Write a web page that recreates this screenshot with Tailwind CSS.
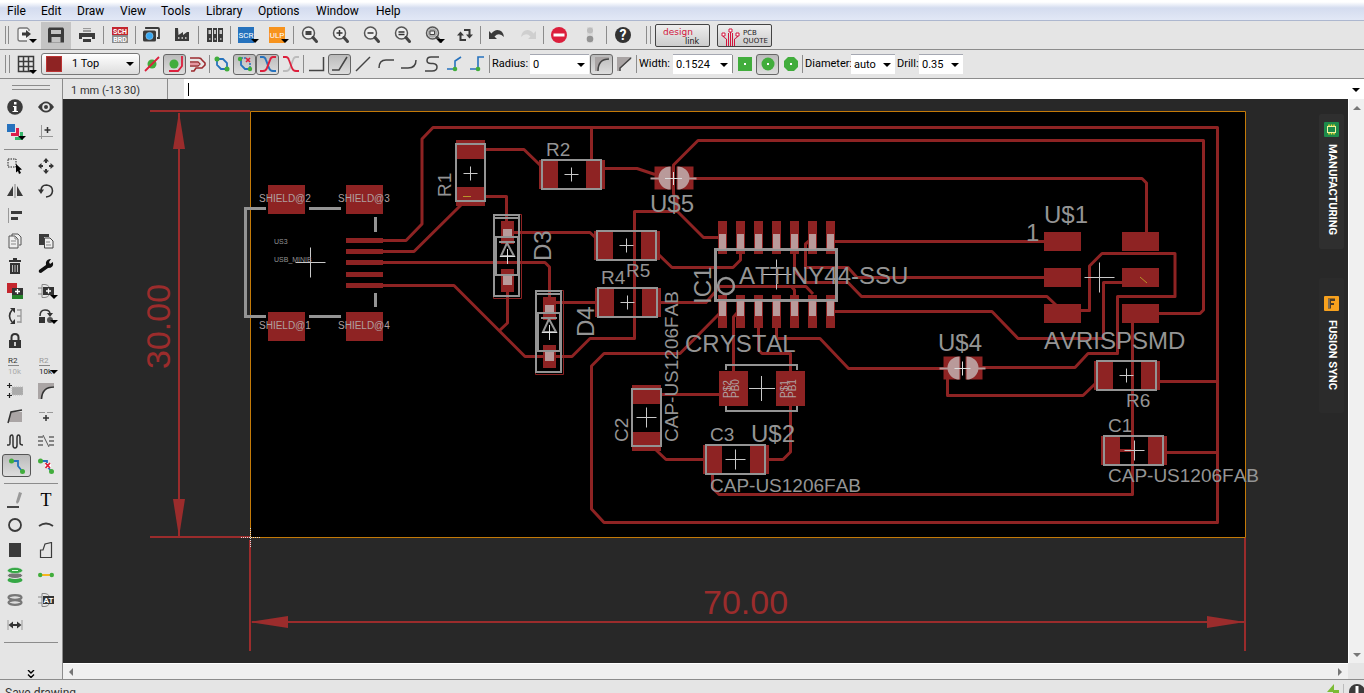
<!DOCTYPE html>
<html lang="en">

<head>
    <meta charset="UTF-8">
    <meta name="viewport" content="width=device-width, initial-scale=1.0">
    <title>Board editor</title>
    <script src="https://cdn.jsdelivr.net/npm/@tailwindcss/browser@4"></script>
</head>

<body class="h-screen flex flex-col overflow-hidden bg-[#e5e5e5] font-[Roboto,sans-serif] text-[11px] text-black">

    <!-- shared shapes -->
    <svg class="hidden">
        <symbol id="drop" viewBox="0 0 8 4"><path d="M0 0H8L4 4Z" fill="#000" /></symbol>
        <symbol id="lens" viewBox="0 0 20 20">
            <circle cx="8.500" cy="8" r="6" fill="#eee" stroke="#555" stroke-width="1.500" />
            <path d="M13 12.500l3.500 4" stroke="#444" stroke-width="3" stroke-linecap="round" />
        </symbol>
    </svg>

    <!-- menu -->
    <nav class="h-[21px] shrink-0 border-b border-[#adb7cf] bg-linear-to-b from-white from-10% via-[#d4dcef] via-40% to-[#e2e8f6] flex items-center pl-[7px] text-[12px] leading-5">
        <a href="#" class="w-[34px] pt-px">File</a>
        <a href="#" class="w-9 pt-px">Edit</a>
        <a href="#" class="w-[43px] pt-px">Draw</a>
        <a href="#" class="w-[41px] pt-px">View</a>
        <a href="#" class="w-[45px] pt-px">Tools</a>
        <a href="#" class="w-[52px] pt-px">Library</a>
        <a href="#" class="w-[58px] pt-px">Options</a>
        <a href="#" class="w-[60px] pt-px">Window</a>
        <a href="#" class="pt-px">Help</a>
    </nav>

    <!-- action toolbar -->
    <div class="h-[29px] shrink-0 border-b border-[#8c8c8c] flex items-center pl-[5px]">
        <span class="w-1 h-[18px] border-x border-[#8c8c8c]"></span>
        <button aria-label="Open" class="relative w-8 h-7 flex items-center justify-center">
            <svg class="size-5" viewBox="0 0 20 20"><path d="M14 6V4.500L12 3H5Q3 3 3 5V14Q3 16 5 16H12" fill="#f5f5f5" stroke="#777" stroke-width="1.300" /><path d="M7 7.500H11V5L16 9L11 13V10.500H7Z" fill="#3b3b3b" /></svg>
            <svg class="absolute right-1 bottom-1.5 w-2 h-1"><use href="#drop" /></svg>
        </button>
        <button aria-label="Save" class="w-[30px] h-[27px] bg-[#c4c4c4] flex items-center justify-center">
            <svg class="size-5" viewBox="0 0 20 20"><path d="M3 2.500H17L18 4V17.500H2V4Z" fill="#3b3b3b" /><path d="M5 5H15V9H5ZM5.500 12H14.500V17.500H5.500Z" fill="#c4c4c4" /></svg>
        </button>
        <button aria-label="Print" class="w-8 h-7 flex items-center justify-center">
            <svg class="size-5" viewBox="0 0 20 20"><path d="M6 3H14V7H6Z" fill="#999" /><path d="M6 4.500H14" stroke="#ddd" /><path d="M2 8H18V14H15V12H5V14H2Z" fill="#3b3b3b" /><path d="M6 14H14V17H6Z" fill="#3b3b3b" /></svg>
        </button>
        <span class="w-px h-[18px] bg-[#8c8c8c]"></span>
        <button aria-label="Schematic / board" class="w-[31px] h-7 flex items-center justify-center">
            <svg class="w-4 h-4" viewBox="0 0 16 16"><path d="M0 0H16V8H0Z" fill="#c4262e" /><path d="M0 8H16V16H0Z" fill="#8c8c8c" /><text x="8" y="7" font-size="7" font-weight="bold" text-anchor="middle" fill="#fff">SCH</text><text x="8" y="15" font-size="7" font-weight="bold" text-anchor="middle" fill="#fff">BRD</text></svg>
        </button>
        <span class="w-px h-[18px] bg-[#8c8c8c]"></span>
        <button aria-label="Image" class="w-[30px] h-7 flex items-center justify-center">
            <svg class="size-5" viewBox="0 0 20 20"><path d="M5 4V3H17Q18 3 18 4V13H16" fill="none" stroke="#3b3b3b" stroke-width="1.800" /><rect x="2" y="5.500" width="13" height="11" rx="1.500" fill="#3b3b3b" /><circle cx="8.500" cy="11" r="3.600" fill="#35a7f2" stroke="#9dcff0" stroke-width=".6" /></svg>
        </button>
        <button aria-label="CAM" class="w-8 h-7 flex items-center justify-center">
            <svg class="size-5" viewBox="0 0 20 20"><path d="M3 3H6L6.500 10L11 7V10L15 7H17V16H3Z" fill="#3b3b3b" /><path d="M6 13H7.500M9.500 13H11M13 13H14.500" stroke="#ddd" stroke-width="1.500" /></svg>
        </button>
        <span class="w-px h-[18px] bg-[#8c8c8c]"></span>
        <button aria-label="Library manager" class="w-[31px] h-7 flex items-center justify-center">
            <svg class="size-5" viewBox="0 0 20 20"><path d="M2 3H7V17H2ZM8 3H12V17H8ZM13 3H18V17H13Z" fill="#3b3b3b" /><path d="M3.500 5H6V9H3.500ZM9 5H11V9H9ZM14.500 5H17V9H14.500Z" fill="#c8c8c8" /><path d="M4 14H5.500M9.500 14H11M15 14H16.500" stroke="#ccc" stroke-width="1.500" /></svg>
        </button>
        <span class="w-px h-[18px] bg-[#8c8c8c]"></span>
        <button aria-label="Script" class="relative w-[30px] h-7 flex items-center justify-center">
            <svg class="w-4 h-4" viewBox="0 0 16 16"><path d="M0 0H16V16H0Z" fill="#2672bd" /><text x="8" y="11" font-size="8" text-anchor="middle" fill="#fff">SCR</text></svg>
            <svg class="absolute right-0.5 bottom-1.5 w-2 h-1"><use href="#drop" /></svg>
        </button>
        <button aria-label="ULP" class="relative w-8 h-7 flex items-center justify-center">
            <svg class="w-4 h-4" viewBox="0 0 16 16"><path d="M0 0H16V16H0Z" fill="#f7931e" /><text x="8" y="11" font-size="8" text-anchor="middle" fill="#fff">ULP</text></svg>
            <svg class="absolute right-1 bottom-1.5 w-2 h-1"><use href="#drop" /></svg>
        </button>
        <span class="w-px h-[18px] bg-[#8c8c8c]"></span>
        <button aria-label="Zoom to fit" class="w-[31px] h-7 flex items-center justify-center">
            <svg class="size-5" viewBox="0 0 20 20"><use href="#lens" /><path d="M5.500 6H11.500V10H5.500Z" fill="#444" /></svg>
        </button>
        <button aria-label="Zoom in" class="w-[31px] h-7 flex items-center justify-center">
            <svg class="size-5" viewBox="0 0 20 20"><use href="#lens" /><path d="M5.500 8H11.500M8.500 5V11" stroke="#333" stroke-width="1.500" /></svg>
        </button>
        <button aria-label="Zoom out" class="w-[31px] h-7 flex items-center justify-center">
            <svg class="size-5" viewBox="0 0 20 20"><use href="#lens" /><path d="M5.500 8H11.500" stroke="#333" stroke-width="1.500" /></svg>
        </button>
        <button aria-label="Redraw" class="w-[31px] h-7 flex items-center justify-center">
            <svg class="size-5" viewBox="0 0 20 20"><use href="#lens" /><path d="M5.500 7H11.500M5.500 9.500H11.500" stroke="#333" stroke-width="1.300" /></svg>
        </button>
        <button aria-label="Zoom select" class="relative w-[31px] h-7 flex items-center justify-center">
            <svg class="size-5" viewBox="0 0 20 20"><use href="#lens" /><circle cx="8.500" cy="8" r="4.800" fill="#aaa" /><path d="M6 6H10.500V9.500H6Z" fill="#eee" stroke="#444" /></svg>
            <svg class="absolute right-1 bottom-1.5 w-2 h-1"><use href="#drop" /></svg>
        </button>
        <button aria-label="Refresh" class="w-[31px] h-7 flex items-center justify-center">
            <svg class="size-5" viewBox="0 0 20 20"><path d="M9 5H14.500V10M11 15H5.500V10" fill="none" stroke="#3b3b3b" stroke-width="2" /><path d="M11 9.500H18L14.500 13.500ZM2 10.500H9L5.500 6.500Z" fill="#3b3b3b" /></svg>
        </button>
        <span class="w-px h-[18px] bg-[#8c8c8c]"></span>
        <button aria-label="Undo" class="w-[31px] h-7 flex items-center justify-center">
            <svg class="size-5" viewBox="0 0 20 20"><path d="M2 6V14H10L7.500 11.500Q12 7 17 12Q16 5 10.500 5Q7 5 4.500 8.500Z" fill="#3b3b3b" /></svg>
        </button>
        <button aria-label="Redo" class="w-[31px] h-7 flex items-center justify-center">
            <svg class="size-5" viewBox="0 0 20 20"><path d="M18 6V14H10L12.500 11.500Q8 7 3 12Q4 5 9.500 5Q13 5 15.500 8.500Z" fill="#cfcfcf" /></svg>
        </button>
        <span class="w-px h-[18px] bg-[#8c8c8c]"></span>
        <button aria-label="Stop" class="w-[30px] h-7 flex items-center justify-center">
            <svg class="size-5" viewBox="0 0 20 20"><circle cx="10" cy="10" r="8" fill="#dc1f3c" /><path d="M4.500 8.500H15.500V11.500H4.500Z" fill="#fff" /></svg>
        </button>
        <button aria-label="Status" class="w-8 h-7 flex items-center justify-center">
            <svg class="size-5" viewBox="0 0 20 20"><path d="M7 2H13V18H7Z" fill="#dadada" /><circle cx="10" cy="5.500" r="3" fill="#bdbdbd" /><circle cx="10" cy="14" r="3.300" fill="#939393" /></svg>
        </button>
        <span class="w-px h-[18px] bg-[#8c8c8c]"></span>
        <button aria-label="Help" class="w-[31px] h-7 flex items-center justify-center">
            <svg class="size-5" viewBox="0 0 20 20"><circle cx="10" cy="10" r="8" fill="#333" /><text x="10" y="15" font-size="14" font-weight="bold" text-anchor="middle" fill="#fff">?</text></svg>
        </button>
        <span class="ml-2 mr-1 w-[5px] h-[18px] border-x border-[#8c8c8c]"></span>
        <button aria-label="design link" class="w-[55px] h-[23px] rounded-[2px] border border-[#444] bg-linear-to-b from-[#eee] to-[#ccc]">
            <svg class="w-full h-full" viewBox="0 0 53 21"><text x="7" y="10" font-size="9" fill="#d2143c" font-family="DejaVu Sans">design</text><text x="29" y="19" font-size="8" fill="#111" font-family="DejaVu Sans">link</text></svg>
        </button>
        <button aria-label="PCB quote" class="ml-[7px] w-[55px] h-[23px] rounded-[2px] border border-[#444] bg-linear-to-b from-[#eee] to-[#ccc]">
            <svg class="w-full h-full" viewBox="0 0 53 21"><g fill="none" stroke="#d2143c" stroke-width="1"><path d="M5.500 11V12L8.500 14V21M10.500 8V21M12.500 7V21M14.500 8V21M19.500 11V12L16.500 14V21" /><path d="M4 8H7V11H4ZM11 4H14V7H11ZM18 8H21V11H18Z" fill="#fff" /></g><text x="25" y="10" font-size="7" fill="#222" font-family="DejaVu Sans">PCB</text><text x="25" y="18" font-size="7" fill="#222" font-family="DejaVu Sans">QUOTE</text></svg>
        </button>
    </div>

    <!-- parameter toolbar -->
    <div class="h-[29px] shrink-0 border-b border-[#8c8c8c] flex items-center pl-[5px]">
        <span class="w-[5px] h-[18px] border-x border-[#8c8c8c]"></span>
        <button aria-label="Grid" class="relative w-[31px] h-7 flex items-center justify-center">
            <svg class="size-5" viewBox="0 0 20 20"><path d="M2.500 2.500H17.500V17.500H2.500ZM2.500 7.500H17.500M2.500 12.500H17.500M7.500 2.500V17.500M12.500 2.500V17.500" fill="none" stroke="#3b3b3b" stroke-width="1.500" /></svg>
            <svg class="absolute right-1 bottom-1 w-2 h-1"><use href="#drop" /></svg>
        </button>
        <div class="relative w-[99px] h-[22px]">
            <select aria-label="Layer" class="appearance-none w-full h-full rounded-[3px] border border-[#777] bg-linear-to-b from-white to-[#ddd] pl-[30px] text-[11px] leading-4">
                <option>1 Top</option>
            </select>
            <span class="absolute left-[5px] top-[3px] size-4 bg-[#8e2323] border border-[#b33] pointer-events-none"></span>
            <svg class="absolute right-[6px] top-[9px] w-2 h-1 pointer-events-none"><use href="#drop" /></svg>
        </div>
        <button aria-label="Ignore obstacles" class="w-[23px] h-[21px] flex items-center justify-center">
            <svg class="size-[18px]" viewBox="0 0 18 18"><circle cx="9" cy="9" r="4.500" fill="#41ad3c" /><path d="M2 16L16 2" stroke="#dc1f3c" stroke-width="1.800" /></svg>
        </button>
        <button aria-label="Walkaround" class="w-[23px] h-[21px] flex items-center justify-center rounded-[3px] border border-[#666] bg-linear-to-b from-[#bbb] to-[#ddd]">
            <svg class="size-[18px]" viewBox="0 0 18 18"><circle cx="8" cy="9" r="4.500" fill="#41ad3c" /><path d="M16 1V11L12 16H3" fill="none" stroke="#dc1f3c" stroke-width="1.800" /></svg>
        </button>
        <button aria-label="Push" class="w-[23px] h-[21px] flex items-center justify-center">
            <svg class="size-[18px]" viewBox="0 0 18 18"><g fill="none"><path d="M1 3H10Q12 3 13 5L16 8V10L13 13H7L5 16H2" stroke="#9c2b2f" stroke-width="1.600" /><path d="M1 7H9L11 9L9 11H1" stroke="#9c2b2f" stroke-width="1.300" /><path d="M1 9H9" stroke="#e4475b" /></g></svg>
        </button>
        <span class="w-px h-[18px] bg-[#8c8c8c]"></span>
        <button aria-label="Loop removal" class="w-[23px] h-[21px] flex items-center justify-center">
            <svg class="size-[18px]" viewBox="0 0 18 18"><path d="M4 4H10L14 8V14H8L4 10Z" fill="none" stroke="#2672bd" stroke-width="1.800" /><circle cx="4" cy="4" r="2.500" fill="#41ad3c" /><circle cx="14" cy="14" r="2.500" fill="#41ad3c" /></svg>
        </button>
        <button aria-label="Keep loops" class="w-[23px] h-[21px] flex items-center justify-center rounded-[3px] border border-[#666] bg-linear-to-b from-[#bbb] to-[#ddd]">
            <svg class="size-[18px]" viewBox="0 0 18 18"><path d="M5 4V10L9 14H14" fill="none" stroke="#2672bd" stroke-width="1.800" /><path d="M5 3H10M14 8V14" stroke="#2672bd" stroke-width="1.500" stroke-dasharray="2 1" /><circle cx="4" cy="4" r="2.200" fill="#41ad3c" /><circle cx="14" cy="14" r="2.200" fill="#41ad3c" /><path d="M10 3L14 7M14 3L10 7" stroke="#dc1f3c" stroke-width="1.600" /></svg>
        </button>
        <button aria-label="Crossing" class="w-[23px] h-[21px] flex items-center justify-center rounded-[3px] border border-[#666] bg-linear-to-b from-[#bbb] to-[#ddd]">
            <svg class="size-[18px]" viewBox="0 0 18 18"><g fill="none" stroke-width="2"><path d="M1 2H4Q6 2 7 5L10 13Q11 16 14 16H17" stroke="#2672bd" /><path d="M17 2H14Q12 2 11 5L8 13Q7 16 4 16H1" stroke="#dc1f3c" /></g></svg>
        </button>
        <button aria-label="No crossing" class="w-[23px] h-[21px] flex items-center justify-center">
            <svg class="size-[18px]" viewBox="0 0 18 18"><g fill="none" stroke-width="1.800"><path d="M17 2H14Q12 2 11 5L8 13Q7 16 4 16H1" stroke="#bbb" /><path d="M1 2H4Q6 2 7 5L10 13Q11 16 14 16H17" stroke="#dc1f3c" /></g></svg>
        </button>
        <span class="w-px h-[18px] bg-[#8c8c8c] mx-px"></span>
        <button aria-label="Bend 0" class="w-[23px] h-[21px] flex items-center justify-center">
            <svg class="size-[18px]" viewBox="0 0 18 18"><path d="M1 15.500H15.500V2" fill="none" stroke="#444" stroke-width="1.500" /></svg>
        </button>
        <button aria-label="Bend 1" class="w-[23px] h-[21px] flex items-center justify-center rounded-[3px] border border-[#666] bg-linear-to-b from-[#bbb] to-[#ddd]">
            <svg class="size-[18px]" viewBox="0 0 18 18"><path d="M1 15H8L16 2" fill="none" stroke="#444" stroke-width="1.500" /></svg>
        </button>
        <button aria-label="Bend 2" class="w-[23px] h-[21px] flex items-center justify-center">
            <svg class="size-[18px]" viewBox="0 0 18 18"><path d="M2 16L16 2" fill="none" stroke="#444" stroke-width="1.500" /></svg>
        </button>
        <button aria-label="Bend 3" class="w-[23px] h-[21px] flex items-center justify-center">
            <svg class="size-[18px]" viewBox="0 0 18 18"><path d="M2 13Q2 5 9 5H17" fill="none" stroke="#444" stroke-width="1.500" /></svg>
        </button>
        <button aria-label="Bend 4" class="w-[23px] h-[21px] flex items-center justify-center">
            <svg class="size-[18px]" viewBox="0 0 18 18"><path d="M1 13H8Q16 13 16 5" fill="none" stroke="#444" stroke-width="1.500" /></svg>
        </button>
        <button aria-label="Bend 5" class="w-[23px] h-[21px] flex items-center justify-center">
            <svg class="size-[18px]" viewBox="0 0 18 18"><path d="M16 2H8Q4 2 4 5.500Q4 8.500 8 8.500H10Q14 9 14 12Q14 16 9 16H2" fill="none" stroke="#444" stroke-width="1.500" /></svg>
        </button>
        <button aria-label="Bend 6" class="w-[23px] h-[21px] flex items-center justify-center">
            <svg class="size-[18px]" viewBox="0 0 18 18"><path d="M1 14H9V6L15 2" fill="none" stroke="#2672bd" stroke-width="1.600" /><circle cx="9" cy="14" r="2.300" fill="#41ad3c" /></svg>
        </button>
        <button aria-label="Bend 7" class="w-[23px] h-[21px] flex items-center justify-center">
            <svg class="size-[18px]" viewBox="0 0 18 18"><path d="M1 14H9V2H15" fill="none" stroke="#2672bd" stroke-width="1.600" /><circle cx="9" cy="14" r="2.300" fill="#41ad3c" /></svg>
        </button>
        <span class="w-px h-[18px] bg-[#8c8c8c]"></span>
        <label for="radius" class="w-10 pl-0.5 pt-px">Radius:</label>
        <div class="relative w-[59px] h-5">
            <select id="radius" class="appearance-none w-full h-full bg-white border-t border-[#a5a8b2] pl-[3px] text-[11px] leading-4"><option>0</option></select>
            <svg class="absolute right-1 top-[9px] w-2 h-1 pointer-events-none"><use href="#drop" /></svg>
        </div>
        <button aria-label="Round miter" class="ml-px w-[23px] h-[21px] flex items-center justify-center rounded-[3px] border border-[#666] bg-linear-to-b from-[#bbb] to-[#ddd]">
            <svg class="size-[18px]" viewBox="0 0 18 18"><path d="M2 2H16V3Q5 4 5 16H2Z" fill="#a9a4a4" /><path d="M5 16Q5 4 16 4" fill="none" stroke="#444" stroke-width="1.500" /></svg>
        </button>
        <button aria-label="Straight miter" class="w-[23px] h-[21px] flex items-center justify-center">
            <svg class="size-[18px]" viewBox="0 0 18 18"><path d="M1 2H16L4 14V16H1Z" fill="#a9a4a4" /><path d="M4 16V13L15 3" fill="none" stroke="#444" stroke-width="1.500" /></svg>
        </button>
        <span class="w-px h-[18px] bg-[#8c8c8c]"></span>
        <label for="width" class="w-9 pl-0.5 pt-px">Width:</label>
        <div class="relative w-[59px] h-5">
            <select id="width" class="appearance-none w-full h-full bg-white border-t border-[#a5a8b2] pl-[3px] text-[11px] leading-4"><option>0.1524</option></select>
            <svg class="absolute right-1 top-[9px] w-2 h-1 pointer-events-none"><use href="#drop" /></svg>
        </div>
        <span class="w-px h-[18px] bg-[#8c8c8c]"></span>
        <button aria-label="Square via" class="w-[23px] h-[21px] flex items-center justify-center">
            <svg class="size-[18px]" viewBox="0 0 18 18"><path d="M2 2H16V16H2Z" fill="#41ad3c" /><path d="M8 8H10V10H8Z" fill="#fff" /></svg>
        </button>
        <button aria-label="Round via" class="w-[23px] h-[21px] flex items-center justify-center rounded-[3px] border border-[#666] bg-linear-to-b from-[#bbb] to-[#ddd]">
            <svg class="size-[18px]" viewBox="0 0 18 18"><circle cx="9" cy="9" r="6.500" fill="#41ad3c" /><path d="M8 8H10V10H8Z" fill="#fff" /></svg>
        </button>
        <button aria-label="Octagon via" class="w-[23px] h-[21px] flex items-center justify-center">
            <svg class="size-[18px]" viewBox="0 0 18 18"><path d="M6 2H12L16 6V12L12 16H6L2 12V6Z" fill="#41ad3c" /><path d="M8 8H10V10H8Z" fill="#fff" /></svg>
        </button>
        <span class="w-px h-[18px] bg-[#8c8c8c]"></span>
        <label for="diameter" class="w-12 pl-0.5 pt-px">Diameter:</label>
        <div class="relative w-11 h-5">
            <select id="diameter" class="appearance-none w-full h-full bg-white border-t border-[#a5a8b2] pl-[3px] text-[11px] leading-4"><option>auto</option></select>
            <svg class="absolute right-1 top-[9px] w-2 h-1 pointer-events-none"><use href="#drop" /></svg>
        </div>
        <label for="drill" class="w-6 pl-0.5 pt-px">Drill:</label>
        <div class="relative w-11 h-5">
            <select id="drill" class="appearance-none w-full h-full bg-white border-t border-[#a5a8b2] pl-[3px] text-[11px] leading-4"><option>0.35</option></select>
            <svg class="absolute right-1 top-[9px] w-2 h-1 pointer-events-none"><use href="#drop" /></svg>
        </div>
    </div>

    <main class="flex-1 min-h-0 flex">
        <!-- tool palette -->
        <aside class="w-[63px] shrink-0 border-r border-[#8c8c8c] flex flex-col pt-1.5">
            <span class="mx-3 h-[5px] border-y border-[#8c8c8c] shrink-0"></span>
            <div class="mt-1 grid grid-cols-[30px_32px] auto-rows-[25px] [&>button]:relative [&>button]:flex [&>button]:items-center [&>button]:justify-center">
                <button aria-label="Info"><svg class="size-4" viewBox="0 0 16 16"><circle cx="8" cy="8" r="7.800" fill="#3b3b3b" /><path d="M6 7H9.500V12H11V13H5.500V12H7V8H6ZM7 3H9.500V5.500H7Z" fill="#fff" /></svg></button>
                <button aria-label="Show"><svg class="size-4" viewBox="0 0 16 16"><path d="M0 8Q8-3 16 8Q8 19 0 8Z" fill="#3b3b3b" /><circle cx="8" cy="8" r="3.800" fill="#e5e5e5" /><circle cx="8" cy="8" r="2" fill="#3b3b3b" /></svg></button>
                <button aria-label="Layers"><svg class="size-4" viewBox="0 0 16 16"><path d="M0 0H8V8H0Z" fill="#2672bd" /><path d="M9 4H12V12H4V9H9Z" fill="#dc1f4c" /><path d="M13 8H16V16H8V13H13Z" fill="#35b56a" /></svg><svg class="absolute right-1 bottom-1 w-2 h-1"><use href="#drop" /></svg></button>
                <button aria-label="Mark"><svg class="size-4" viewBox="0 0 16 16"><path d="M3.500 1V15M1 12.500H15" stroke="#999" /><path d="M9.500 3V9M6.500 6H12.500" stroke="#333" stroke-width="1.500" /></svg></button>
            </div>
            <span class="mx-1 mt-[5px] mb-[3px] h-px bg-[#8c8c8c] shrink-0"></span>
            <div class="grid grid-cols-[30px_32px] auto-rows-[25px] [&>button]:relative [&>button]:flex [&>button]:items-center [&>button]:justify-center">
                <button aria-label="Group"><svg class="size-4" viewBox="0 0 16 16"><path d="M1 1H9V9H1Z" fill="none" stroke="#222" stroke-dasharray="1.500 1" /><path d="M9 6L15 11.500L12.500 12L14 15L12 16L11 13L9 14.500Z" fill="#000" /></svg></button>
                <button aria-label="Move"><svg class="size-4" viewBox="0 0 16 16"><path d="M8 0L11 3.500H9V5H7V3.500H5ZM8 16L5 12.500H7V11H9V12.500H11ZM0 8L3.500 5V7H5V9H3.500V11ZM16 8L12.500 11V9H11V7H12.500V5Z" fill="#333" /></svg></button>
                <button aria-label="Mirror"><svg class="size-4" viewBox="0 0 16 16"><path d="M0 13L6 3V13ZM16 13L10 3V13Z" fill="#3b3b3b" /><path d="M8 1V15" stroke="#999" stroke-width="1.300" /></svg></button>
                <button aria-label="Rotate"><svg class="size-4" viewBox="0 0 16 16"><path d="M3 8Q3 2 8.500 2Q14.500 2.500 14.500 8Q14 13.500 8 14" fill="none" stroke="#333" stroke-width="1.600" /><path d="M0 6.500H6L3 11Z" fill="#333" /></svg></button>
                <button aria-label="Align"><svg class="size-4" viewBox="0 0 16 16"><path d="M1.500 0V15" stroke="#999" /><path d="M4 3H15V6H4ZM4 9H11V12H4Z" fill="#3b3b3b" /></svg></button>
                <span></span>
                <button aria-label="Copy"><svg class="size-4" viewBox="0 0 16 16"><path d="M5 3V1H11L14 4V12H12" fill="#eee" stroke="#555" /><path d="M2 3H8L11 6V15H2Z" fill="#eee" stroke="#555" /><path d="M8 3V6H11M4 8H9M4 11H9" fill="none" stroke="#888" /></svg></button>
                <button aria-label="Paste"><svg class="size-4" viewBox="0 0 16 16"><path d="M1 1H11V4H6V12H1Z" fill="#3b3b3b" /><path d="M6.500 5H12L15 8V15H6.500Z" fill="#eee" stroke="#444" /><path d="M8 9H12M8 12H13" stroke="#888" /></svg></button>
                <button aria-label="Delete"><svg class="size-4" viewBox="0 0 16 16"><path d="M2 2H6V0H10V2H14V4H2ZM3 5H13V16H3Z" fill="#333" /><path d="M5.500 7V14M8 7V14M10.500 7V14" stroke="#bbb" /></svg></button>
                <button aria-label="Change"><svg class="size-4" viewBox="0 0 16 16"><path d="M1 12L8 7Q7 2 12 1L13 1L11 4L12 6L15 4Q16 10 10 10L3 15Q0 15 1 12Z" fill="#111" /></svg></button>
                <button aria-label="Add part"><svg class="size-4" viewBox="0 0 16 16"><path d="M0 0H10V10H0Z" fill="#c4262e" /><path d="M5 8H16V16H5Z" fill="#25822b" /><path d="M5 5H16V12H5Z" fill="#333" /><path d="M10.500 6V11M8 8.500H13" stroke="#fff" stroke-width="1.300" /></svg></button>
                <button aria-label="Add gate"><svg class="size-4" viewBox="0 0 16 16"><path d="M4 1.500H7Q12 2 12 8Q12 14 7 14.500H4ZM0 5H4M0 11H4" fill="none" stroke="#888" /><path d="M5 4H16V12H5Z" fill="#333" /><path d="M10.500 5.500V10.500M8 8H13" stroke="#fff" stroke-width="1.300" /></svg><svg class="absolute right-1 bottom-1 w-2 h-1"><use href="#drop" /></svg></button>
                <button aria-label="Pinswap"><svg class="size-4" viewBox="0 0 16 16"><path d="M5 2Q0 8 5 14" fill="none" stroke="#333" stroke-width="1.600" /><path d="M3 0H8V5ZM3 16H8V11Z" fill="#333" /><path d="M14 1V15M10 2H14M10 8H14M10 14H14" stroke="#999" stroke-width="1.300" /></svg></button>
                <button aria-label="Replace"><svg class="size-4" viewBox="0 0 16 16"><path d="M2 8Q2 2 7 2Q12 2 12 6" fill="none" stroke="#333" stroke-width="1.500" /><path d="M9 5H15L12 9ZM1 9H7V15H1Z" fill="#333" /><circle cx="12" cy="12" r="3" fill="#555" /></svg><svg class="absolute right-1 bottom-1 w-2 h-1"><use href="#drop" /></svg></button>
                <button aria-label="Lock"><svg class="size-4" viewBox="0 0 16 16"><path d="M4.500 7V4.500Q4.500 1 8 1Q11.500 1 11.500 4.500V7" fill="none" stroke="#333" stroke-width="2" /><path d="M2 7H14V15H2Z" fill="#333" /><path d="M8 9V13" stroke="#ddd" stroke-width="1.800" /></svg></button>
                <span></span>
                <button aria-label="Name"><svg class="w-4 h-5" viewBox="0 0 16 20"><text x="1" y="7" font-size="8" fill="#333">R2</text><path d="M1 9.500H12" stroke="#888" /><text x="1" y="18" font-size="8" fill="#aaa">10k</text></svg></button>
                <button aria-label="Value"><svg class="w-4 h-5" viewBox="0 0 16 20"><text x="1" y="7" font-size="8" fill="#999">R2</text><path d="M1 9.500H12" stroke="#888" /><text x="1" y="18" font-size="8" fill="#222">10k</text></svg><svg class="absolute right-1 bottom-1 w-2 h-1"><use href="#drop" /></svg></button>
                <button aria-label="Smash"><svg class="size-4" viewBox="0 0 16 16"><path d="M5 4H16V12H5Z" fill="#aaa" stroke="#bbb" stroke-dasharray="1 1" /><path d="M2.500 0V5M0 2.500H5M2.500 10V15M0 12.500H5" stroke="#222" stroke-width="1.200" /></svg></button>
                <button aria-label="Miter"><svg class="size-4" viewBox="0 0 16 16"><path d="M0 0H16V3Q4 4 4 16H0Z" fill="#aaa5a5" /><path d="M3.500 16Q4 4 16 4" fill="none" stroke="#333" stroke-width="1.600" /></svg></button>
                <button aria-label="Split"><svg class="size-4" viewBox="0 0 16 16"><path d="M4 4H15V14H1Z" fill="#aaa5a5" /><path d="M1 15L4 4L15 2" fill="none" stroke="#333" stroke-width="1.500" /></svg></button>
                <button aria-label="Optimize"><svg class="size-4" viewBox="0 0 16 16"><path d="M1 4.500H7M9 4.500H15" stroke="#999" /><path d="M8 7V13M5 10H11" stroke="#333" stroke-width="1.500" /></svg></button>
                <button aria-label="Meander"><svg class="size-4" viewBox="0 0 16 16"><path d="M0 12H2Q3 12 3 10V5Q3 2 5 2Q6 2 6 5V12Q6 15 8 15Q10 15 10 12V5Q10 2 11.500 2Q13 2 13 5V10Q13 12 16 12" fill="none" stroke="#333" stroke-width="1.500" /></svg></button>
                <button aria-label="Ratsnest"><svg class="size-4" viewBox="0 0 16 16"><path d="M0 4H5M0 8H5M0 12H5M11 4H16M11 8H16M11 12H16" stroke="#666" stroke-width="1.500" /><path d="M5 2L11 14" stroke="#555" /></svg></button>
                <button aria-label="Route" class="my-px ml-0.5 -mr-px rounded-[3px] border border-[#555] bg-linear-to-b from-[#bbb] to-[#ddd]"><svg class="size-4" viewBox="0 0 16 16"><path d="M3 3H9V8L13 13" fill="none" stroke="#2672bd" stroke-width="1.800" /><circle cx="2.500" cy="3" r="2.500" fill="#41ad3c" /><circle cx="13.500" cy="13.500" r="2.500" fill="#41ad3c" /></svg></button>
                <button aria-label="Ripup"><svg class="size-4" viewBox="0 0 16 16"><path d="M3 3H9V8L13 13" fill="none" stroke="#2672bd" stroke-width="1.800" /><circle cx="2.500" cy="3" r="2.500" fill="#41ad3c" /><circle cx="13.500" cy="13.500" r="2.500" fill="#41ad3c" /><path d="M7 5H13V10H7Z" fill="#fff" /><path d="M7.500 5L12 10M12 5L7.500 10" stroke="#dc1f3c" stroke-width="1.800" /></svg></button>
            </div>
            <span class="mx-1 mt-[5px] mb-[3px] h-px bg-[#8c8c8c] shrink-0"></span>
            <div class="grid grid-cols-[30px_32px] auto-rows-[25px] [&>button]:relative [&>button]:flex [&>button]:items-center [&>button]:justify-center">
                <button aria-label="Line"><svg class="size-4" viewBox="0 0 16 16"><path d="M12 0L15 1L12 10L10 12L9 10Z" fill="#999" /><path d="M0 15H12" stroke="#111" stroke-width="1.500" /></svg></button>
                <button aria-label="Text" class="font-['Liberation_Serif',serif] text-[18px] leading-5">T</button>
                <button aria-label="Circle"><svg class="size-4" viewBox="0 0 16 16"><circle cx="8" cy="8" r="6" fill="none" stroke="#3b3b3b" stroke-width="1.800" /></svg></button>
                <button aria-label="Arc"><svg class="size-4" viewBox="0 0 16 16"><path d="M1 9Q8 4 15 9" fill="none" stroke="#3b3b3b" stroke-width="1.800" /></svg></button>
                <button aria-label="Rectangle"><svg class="size-4" viewBox="0 0 16 16"><path d="M2 1H14V15H2Z" fill="#3b3b3b" /></svg></button>
                <button aria-label="Polygon"><svg class="size-4" viewBox="0 0 16 16"><path d="M2.500 15.500V8H5L7 2L13.500 .5V15.500Z" fill="none" stroke="#3b3b3b" stroke-width="1.200" /></svg></button>
                <button aria-label="Via"><svg class="size-4" viewBox="0 0 16 16"><ellipse cx="8" cy="13" rx="7.500" ry="3" fill="#35a845" /><ellipse cx="8" cy="8.500" rx="7.500" ry="3" fill="#777" stroke="#e5e5e5" /><ellipse cx="8" cy="3.500" rx="7.500" ry="3" fill="#35a845" stroke="#e5e5e5" stroke-width=".5" /><path d="M5 3.500H11" stroke="#dfd" /></svg></button>
                <button aria-label="Signal"><svg class="size-4" viewBox="0 0 16 16"><path d="M2 8H14" stroke="#f7b51e" stroke-width="2" /><circle cx="2.200" cy="8" r="2.200" fill="#41ad3c" /><circle cx="13.800" cy="8" r="2.200" fill="#41ad3c" /></svg></button>
                <button aria-label="Hole"><svg class="size-4" viewBox="0 0 16 16"><ellipse cx="8" cy="10.500" rx="6.500" ry="2.300" fill="#ddd" stroke="#777" stroke-width="2.200" /><ellipse cx="8" cy="5.500" rx="6.500" ry="2.300" fill="#ddd" stroke="#777" stroke-width="2.200" /></svg></button>
                <button aria-label="Attribute"><svg class="size-4" viewBox="0 0 16 16"><path d="M4 1.500H7Q12 2 12 8Q12 14 7 14.500H4ZM0 5H4M0 11H4" fill="none" stroke="#888" /><path d="M5 4H16V12H5Z" fill="#333" /><text x="10.500" y="11" font-size="8" font-weight="bold" text-anchor="middle" fill="#fff">AT</text></svg></button>
                <button aria-label="Dimension"><svg class="size-4" viewBox="0 0 16 16"><path d="M1 3V13M15 3V13" stroke="#999" /><path d="M4 8H12" stroke="#333" stroke-width="2" /><path d="M1.500 8L6 4.500V11.500ZM14.500 8L10 11.500V4.500Z" fill="#333" /></svg></button>
            </div>
            <span class="mx-1 mt-[5px] h-px bg-[#8c8c8c] shrink-0"></span>
            <button aria-label="More tools" class="mt-auto mb-px self-center"><svg class="w-2 h-2" viewBox="0 0 8 8"><path d="M1 0L4 3L7 0M1 4.500L4 7.500L7 4.500" fill="none" stroke="#000" stroke-width="1.400" /></svg></button>
        </aside>

        <section class="flex-1 min-w-0 flex flex-col">
            <!-- command line -->
            <div class="h-5 shrink-0 flex">
                <output class="w-[105px] border-r border-[#8c8c8c] pl-2 leading-[23px] text-[#333]">1 mm (-13 30)</output>
                <div class="relative flex-1 ml-4 bg-white">
                    <input type="text" aria-label="Command" class="block w-full h-full pl-1 outline-none text-[12px] leading-4">
                    <span class="absolute left-1 top-1 w-px h-[13px] bg-black"></span>
                    <svg class="absolute right-1 top-[9px] w-2 h-1 pointer-events-none"><use href="#drop" /></svg>
                </div>
            </div>

            <div class="flex-1 min-h-0 flex">
                <div class="relative flex-1 min-w-0 bg-[#282828]">
                    <svg class="block w-full h-full [font-kerning:none]" viewBox="63 99 1285 564" font-family="Liberation Sans, Arial, sans-serif">
                        <defs>
                            <g id="plus"><path d="M-7 0H7M0-7V7" stroke="#c9c9c9" /></g>
                            <g id="plusMid"><path d="M-10 0H10M0-10V10" stroke="#c9c9c9" /></g>
                            <g id="plusBig"><path d="M-15 0H15M0-15V15" stroke="#c9c9c9" /></g>
                            <g id="chipH">
                                <path d="M-33-14H-14V15H-33ZM14-14H33V15H14Z" fill="#8e2323" />
                                <path d="M-30-14H29V15H-30Z" fill="none" stroke="#949494" stroke-width="2" />
                            </g>
                            <g id="chipV">
                                <path d="M-14-33H15V-14H-14ZM-14 14H15V33H-14Z" fill="#8e2323" />
                                <path d="M-14-29H15V28H-14Z" fill="none" stroke="#949494" stroke-width="2" />
                            </g>
                            <g id="diode">
                                <path d="M493.500 214.500H521.500V298.500H493.500Z" fill="none" stroke="#8e2323" />
                                <path d="M501 221H514V244H501ZM501 269H514V292H501Z" fill="#8e2323" />
                                <path d="M503 229H512V237H503ZM503 275H512V285H503Z" fill="#b99a9a" />
                                <g fill="none" stroke="#949494" stroke-width="2"><path d="M494 215H519V296H494ZM494 218H519M496 237H518V275H496Z" /><path d="M499 242H515M507 243L501 256H514Z" /></g>
                                <path d="M500 256.500H515M507.500 249V264" stroke="#ddd" />
                            </g>
                            <g id="jumper">
                                <path d="M-19-12H-2V11H-19ZM3-12H20V11H3Z" fill="#8e2323" />
                                <path d="M-3-12A12 11.500 0 0 0-3 11ZM4-12A12 11.500 0 0 1 4 11Z" fill="#b99a9a" />
                                <path d="M-23 0H-10M10 0H23" stroke="#b99a9a" stroke-width="2" />
                                <path d="M-8 0H8M0-7V7" stroke="#ddd" />
                            </g>
                        </defs>

                        <path d="M250.500 111.500H1245.500V537.500H250.500Z" fill="#000" stroke="#c47a08" />

                        <!-- traces -->
                        <g fill="none" stroke="#8e2323" stroke-width="3" stroke-linejoin="round">
                            <path d="M383 240.500H406L422 224V139L433 127.500H1217.500V522.500H604L591.500 509V366L604 353.500H680L719 314" />
                            <path d="M591.500 127V160M383 251.500H414L461 205M383 262.500H545L549.500 267V300" />
                            <path d="M383 285.500H454L525 356.500H572L590 338.500H634.500V211.500H677" />
                            <path d="M485 149.500H524L541 166M485 196.500H506.500V225M507 232.500H590L597 239M507.500 290V323L499 331" />
                            <path d="M605 168.500H637L655 174.500M677 211L673.500 193V165L698 140.500H1203.500V310L1200 313.500H1158" />
                            <path d="M690 178.500H1142L1146.500 183V235M677 195V211L703.500 237.500H720" />
                            <path d="M658 254L672 267.500H733L740.500 260V250M555 302.500H597M659 302.500H706L720 286.500H806L813 294M791 286L794.500 290V298" />
                            <path d="M794.500 250V271L806 282.500H848L861.500 296.500H1047L1056 305" />
                            <path d="M809 241L805.500 244V267.500H848L857 277.500H1050M835 241.500H1050" />
                            <path d="M835 311.500H992L1018 338.500H1103.500V282.500H1130" />
                            <path d="M776.500 325V338.500H820L848.500 368.500H950M758.500 325V350L762 353.500H790.500V452L783 459.500H768" />
                            <path d="M737 313L733.500 317V375M661 394.500H725M656 450L666 459.500H705" />
                            <path d="M712.500 470V488L719 494.500H1132.500V320M1120 450.500H1132" />
                            <path d="M1080 310.500H1089.500V266L1102 253.500H1175V296.500H1117.500V353.500H1088L1075 367.500H975" />
                            <path d="M947.500 378V395.500H1083L1095 384M1160 381.500H1217M1166 452.500H1217" />
                        </g>

                        <!-- USB connector -->
                        <g fill="#8e2323">
                            <path d="M268 185H305V214H268ZM346 185H383V214H346ZM268 312H305V341H268ZM346 312H383V341H346Z" />
                            <path d="M346 238H383V243H346ZM346 249H383V254H346ZM346 260H383V265H346ZM346 272H383V277H346ZM346 283H383V288H346Z" />
                        </g>
                        <path d="M266 208.500H245.500V316.500H266M309 208.500H341M309 316.500H341M375.500 217V232M375.500 293V307" fill="none" stroke="#949494" stroke-width="3" />
                        <use href="#plusBig" x="310.500" y="262.500" />

                        <!-- pads of IC1, crystal and the programming header -->
                        <path d="M718 221h9v33h-9zM736 221h9v33h-9zM754 221h9v33h-9zM772 221h9v33h-9zM790 221h9v33h-9zM808 221h9v33h-9zM826 221h9v33h-9zM718 295h9v33h-9zM736 295h9v33h-9zM754 295h9v33h-9zM772 295h9v33h-9zM790 295h9v33h-9zM808 295h9v33h-9zM826 295h9v33h-9z" fill="#8e2323" />
                        <path d="M715.500 249.500H836.500V300.500H715.500Z" fill="none" stroke="#949494" stroke-width="3" />
                        <path d="M719 234h7v15h-7zM737 234h7v15h-7zM755 234h7v15h-7zM773 234h7v15h-7zM791 234h7v15h-7zM809 234h7v15h-7zM827 234h7v15h-7zM719 301h7v15h-7zM737 301h7v15h-7zM755 301h7v15h-7zM773 301h7v15h-7zM791 301h7v15h-7zM809 301h7v15h-7zM827 301h7v15h-7z" fill="#b99a9a" />
                        <circle cx="726" cy="286" r="8" fill="none" stroke="#949494" stroke-width="2.500" />
                        <use href="#plusBig" x="776.500" y="274.500" />
                        <path d="M719 371H748V406H719ZM776 371H805V406H776Z" fill="#8e2323" />
                        <path d="M726 370V365H797V370M726 406V411H797V406" fill="none" stroke="#949494" stroke-width="2" />
                        <path d="M749 388.500H775M761.500 376V401" stroke="#c9c9c9" />
                        <path d="M1044 232H1081V251H1044ZM1044 268H1081V287H1044ZM1044 304H1081V323H1044ZM1122 232H1159V251H1122ZM1122 268H1159V287H1122ZM1122 304H1159V323H1122Z" fill="#8e2323" />
                        <use href="#plusBig" x="1099.500" y="277.500" />

                        <!-- chip parts -->
                        <use href="#chipV" x="470" y="173" /><use href="#plus" x="470.500" y="173.500" />
                        <use href="#chipV" x="646" y="418" /><use href="#plusMid" x="646.500" y="417.500" />
                        <use href="#chipH" x="572" y="174" /><use href="#plus" x="571.500" y="174.500" />
                        <use href="#chipH" x="627" y="245" /><use href="#plus" x="626.500" y="245.500" />
                        <use href="#chipH" x="628" y="302" /><use href="#plus" x="627.500" y="302.500" />
                        <use href="#chipH" x="736" y="459" /><use href="#plusMid" x="735.500" y="459.500" />
                        <use href="#chipH" x="1127" y="375" /><use href="#plus" x="1126.500" y="375.500" />
                        <use href="#chipH" x="1134" y="450" /><use href="#plusMid" x="1134.500" y="450.500" />
                        <use href="#diode" /><use href="#diode" x="42" y="76" />
                        <use href="#jumper" x="673.500" y="178.500" /><use href="#jumper" x="962.500" y="368.500" />
                        <path d="M673.500 165V193" stroke="#8e2323" stroke-width="3" />
                        <path d="M665 178.500H682M673.500 172V185" stroke="#ddd" />
                        <path d="M463 196.500H471M1140 277L1147 283" stroke="#b8952a" />

                        <!-- names and values -->
                        <g fill="#949494" font-size="19">
                            <text x="546" y="156">R2</text>
                            <text x="601" y="284">R4</text>
                            <text x="626" y="277">R5</text>
                            <text x="1126" y="407">R6</text>
                            <text x="1108" y="432">C1</text>
                            <text x="710" y="441">C3</text>
                            <text x="710" y="492">CAP-US1206FAB</text>
                            <text x="1108" y="482">CAP-US1206FAB</text>
                            <text transform="translate(451 197) rotate(-90)">R1</text>
                            <text transform="translate(628 442) rotate(-90)">C2</text>
                            <text transform="translate(678 442) rotate(-90)">CAP-US1206FAB</text>
                        </g>
                        <g fill="#949494" font-size="24">
                            <text x="650" y="212">U$5</text>
                            <text x="1044" y="223">U$1</text>
                            <text x="1026" y="241">1</text>
                            <text x="938" y="351">U$4</text>
                            <text x="751" y="442">U$2</text>
                            <text x="739" y="284">ATTINY44-SSU</text>
                            <text x="685" y="352">CRYSTAL</text>
                            <text x="1044" y="349">AVRISPSMD</text>
                            <text transform="translate(551 261) rotate(-90)">D3</text>
                            <text transform="translate(594 337) rotate(-90)">D4</text>
                            <text transform="translate(711 304) rotate(-90)">IC1</text>
                        </g>
                        <g fill="#b0a0a0" font-size="10">
                            <text x="259" y="202">SHIELD@2</text>
                            <text x="338" y="202">SHIELD@3</text>
                            <text x="259" y="329">SHIELD@1</text>
                            <text x="338" y="329">SHIELD@4</text>
                            <text transform="translate(731 398) rotate(-90)">P$2</text>
                            <text transform="translate(739 398) rotate(-90)">PB0</text>
                            <text transform="translate(788 398) rotate(-90)">P$1</text>
                            <text transform="translate(796 398) rotate(-90)">PB1</text>
                        </g>
                        <g fill="#949494" font-size="7">
                            <text x="274" y="244">US3</text>
                            <text x="274" y="262">USB_MINIB</text>
                        </g>

                        <!-- dimensions -->
                        <g stroke="#9b2c2c" stroke-width="2" fill="none"><path d="M150 111H250M150 537H250M179 113V536M250 540V651M1245 538V651M252 622H1244" /></g>
                        <path d="M179 112L185 149H173ZM179 537L185 499H173ZM250 622L288 616V628ZM1245 622L1207 616V628Z" fill="#9b2c2c" />
                        <text x="703" y="614" font-size="34" fill="#9b2c2c">70.00</text>
                        <text transform="translate(170 369) rotate(-90)" font-size="34" fill="#9b2c2c">30.00</text>
                        <path d="M241 537.500H261M250.500 528V548" stroke="#ddd" stroke-dasharray="1 1" />
                    </svg>

                    <!-- docked side tabs -->
                    <button class="absolute right-1 top-[15px] w-[25px] h-[135px] bg-[#2f2f2f] rounded-[2px] flex flex-col items-center pt-2 gap-[7px] text-white font-bold text-[11px] leading-4">
                        <svg class="size-[15px] shrink-0" viewBox="0 0 15 15"><rect width="15" height="15" rx="1" fill="#1d8a4b" /><path d="M5 2.500V12.500M7.500 2.500V12.500M10 2.500V12.500" stroke="#e9d82e" stroke-width="1.500" /><rect x="3.500" y="4.500" width="8" height="6" fill="#1d8a4b" stroke="#f2f2a0" /></svg>
                        <span class="[writing-mode:vertical-rl] whitespace-nowrap">MANUFACTURING</span>
                    </button>
                    <button class="absolute right-1 top-[179px] w-[25px] h-[135px] bg-[#2b2b2b] rounded-[2px] flex flex-col items-center pt-[18px] gap-[9px] text-white font-bold text-[11px] leading-4">
                        <svg class="size-[15px] shrink-0" viewBox="0 0 15 15"><rect width="15" height="15" rx="1" fill="#f7a11e" /><path d="M4 2.500H11V5H7V7H10V9H7V12.500H4Z" fill="#4a3b28" /><path d="M5 3V12" stroke="#a99c88" /></svg>
                        <span class="[writing-mode:vertical-rl] whitespace-nowrap">FUSION SYNC</span>
                    </button>
                </div>
                <div class="w-4 shrink-0 bg-[#f0f0f0] border-l border-white flex flex-col justify-between items-center pt-[7px] pb-1.5">
                    <svg class="w-2 h-1" viewBox="0 0 8 4"><path d="M4 0L8 4H0Z" fill="#777" /></svg>
                    <svg class="w-2 h-1" viewBox="0 0 8 4"><path d="M0 0H8L4 4Z" fill="#777" /></svg>
                </div>
            </div>
            <div class="h-4 shrink-0 flex">
                <div class="flex-1 bg-[#f0f0f0] border-t border-white flex justify-between items-center px-1.5">
                    <svg class="w-1 h-2" viewBox="0 0 4 8"><path d="M0 4L4 0V8Z" fill="#777" /></svg>
                    <svg class="w-1 h-2" viewBox="0 0 4 8"><path d="M4 4L0 0V8Z" fill="#777" /></svg>
                </div>
                <span class="w-4"></span>
            </div>
        </section>
    </main>

    <!-- status bar -->
    <footer class="h-3.5 shrink-0 border-t border-[#8c8c8c] overflow-hidden flex justify-between pl-[5px]">
        <span class="pt-[5px] text-[12px] leading-4 text-[#333]">Save drawing...</span>
        <div class="flex pt-1 gap-1">
            <svg class="w-3 h-4" viewBox="0 0 12 16"><path d="M7 0L0 8H6V12H12V6H7Z" fill="#7bbb35" /></svg>
            <span class="w-px h-4 bg-[#bbb]"></span>
            <svg class="w-4 h-4" viewBox="0 0 16 16"><circle cx="9" cy="8" r="8" fill="#3b3b3b" /><path d="M9 2V9" stroke="#fff" stroke-width="3" /></svg>
        </div>
    </footer>
</body>

</html>
